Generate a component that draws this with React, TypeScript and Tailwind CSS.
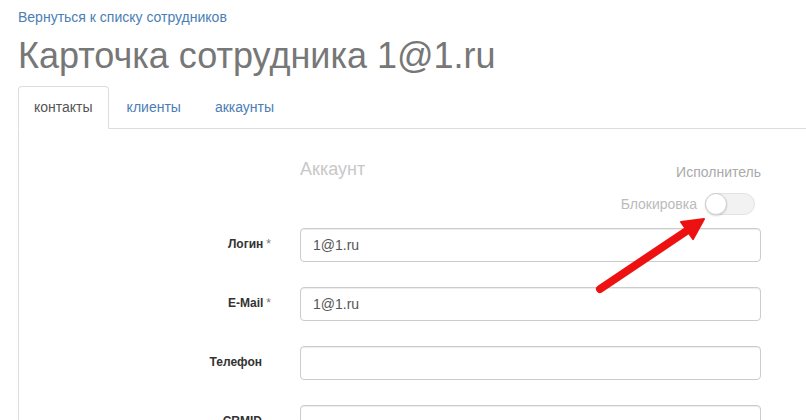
import React from 'react'

type FieldProps = {
  label: string
  required?: boolean
  value?: string
}

function Field({ label, required, value }: FieldProps) {
  return (
    <div className="flex items-center">
      <div className="w-[282px] pr-[38px] text-right text-[12px] font-bold leading-[20px] text-[#333] -mt-[3px]">
        {label}
        {required && <span className="-mr-[9px] ml-[3px] font-normal text-[#777]">*</span>}
      </div>
      <div className="flex h-[34px] w-[461px] items-center rounded-[4px] border border-[#ccc] px-[12px] text-[14px] text-[#555] shadow-[inset_0_1px_1px_rgba(0,0,0,0.075)]">
        {value}
      </div>
    </div>
  )
}

export default function App() {
  return (
    <div className="relative h-[420px] overflow-hidden bg-white pl-[18px] font-['Liberation_Sans',Arial,sans-serif]">
      <a className="block pt-[7px] text-[14px] leading-[20px] text-[#4a7eb5]" href="#">
        Вернуться к списку сотрудников
      </a>
      <h1 className="mt-[9px] text-[36px] leading-[40px] text-[#777]">Карточка сотрудника 1@1.ru</h1>

      <div className="mt-[10px] flex border-b border-[#ddd]">
        <div className="-mb-px mr-[2px] rounded-t-[4px] border border-[#ddd] border-b-white bg-white px-[15px] py-[10px] text-[14px] leading-[20px] text-[#555]">
          контакты
        </div>
        <div className="mr-[2px] border border-transparent px-[15px] py-[10px] text-[14px] leading-[20px] text-[#4a7eb5]">
          клиенты
        </div>
        <div className="mr-[2px] border border-transparent px-[15px] py-[10px] text-[14px] leading-[20px] text-[#4a7eb5]">
          аккаунты
        </div>
      </div>

      <div className="h-[300px] border-l border-[#ddd] pt-[28px]">
        <div className="ml-[281px] w-[461px]">
          <div className="flex items-start justify-between">
            <div className="text-[18px] leading-[24px] text-[#c8c8c8]">Аккаунт</div>
            <div className="mt-[5px] text-[14px] leading-[20px] text-[#aaa]">Исполнитель</div>
          </div>
          <div className="mt-[11px] flex items-center justify-end gap-[8px]">
            <span className="text-[14px] leading-[20px] text-[#bbb]">Блокировка</span>
            <div className="mr-[6px] flex h-[22px] w-[50px] items-center rounded-full border border-[#e3e3e3] bg-[#f2f2f2]">
              <div className="-ml-px h-[22px] w-[22px] rounded-full border border-[#cfcfcf] bg-white shadow-[0_1px_2px_rgba(0,0,0,0.15)]" />
            </div>
          </div>
        </div>

        <div className="-ml-px mt-[13px] flex flex-col gap-[25px]">
          <Field label="Логин" required value="1@1.ru" />
          <Field label="E-Mail" required value="1@1.ru" />
          <Field label="Телефон" />
          <Field label="CRMID" />
        </div>
      </div>

      <svg className="pointer-events-none absolute left-0 top-0" width="806" height="420" viewBox="0 0 806 420">
        <line x1="600" y1="289" x2="688" y2="230" stroke="#ee1111" strokeWidth="8" strokeLinecap="round" />
        <polygon points="704,219 693,239 681,222" fill="#ee1111" stroke="#ee1111" strokeWidth="2" strokeLinejoin="round" />
      </svg>
    </div>
  )
}
